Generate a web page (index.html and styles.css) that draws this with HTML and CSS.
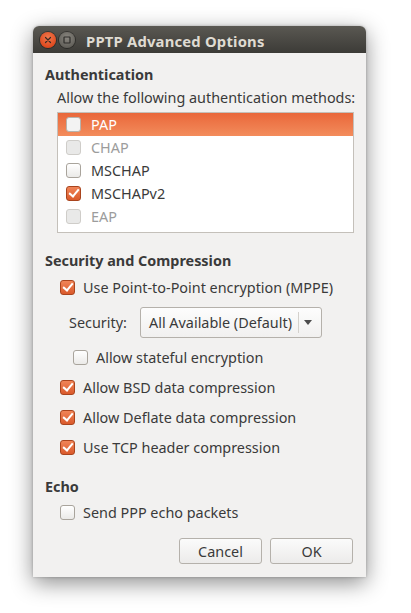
FILE: index.html
```html
<!DOCTYPE html>
<html>
<head>
<meta charset="utf-8">
<link rel="stylesheet" href="styles.css">
</head>
<body>
<div class="window">
  <div class="titlebar">
    <span class="wbtn close"><svg width="16" height="16" viewBox="0 0 16 16"><path d="M5.5 5.5l5 5M10.5 5.5l-5 5" stroke="#3a2a22" stroke-width="1.2" stroke-linecap="round"/></svg></span>
    <span class="wbtn mini"><svg width="16" height="16" viewBox="0 0 16 16"><rect x="5" y="5" width="6" height="6" rx="0.5" fill="none" stroke="#2e2d2a" stroke-width="1.2"/></svg></span>
    <span class="title">PPTP Advanced Options</span>
  </div>
  <div class="content">
    <div class="heading h-auth">Authentication</div>
    <div class="sub">Allow the following authentication methods:</div>
    <div class="list">
      <div class="row selected"><span class="cb"></span><span>PAP</span></div>
      <div class="row disabled"><span class="cb"></span><span>CHAP</span></div>
      <div class="row"><span class="cb"></span><span>MSCHAP</span></div>
      <div class="row"><span class="cb checked"></span><span>MSCHAPv2</span></div>
      <div class="row disabled"><span class="cb"></span><span>EAP</span></div>
    </div>

    <div class="heading h-sec">Security and Compression</div>
    <div class="opt first"><span class="cb checked"></span><span>Use Point-to-Point encryption (MPPE)</span></div>
    <div class="secrow">
      <span class="seclabel">Security:</span>
      <div class="combo"><span class="combotext">All Available (Default)</span><span class="combosep"></span><span class="arrow"></span></div>
    </div>
    <div class="opt stateful"><span class="cb"></span><span>Allow stateful encryption</span></div>
    <div class="opt bsd"><span class="cb checked"></span><span>Allow BSD data compression</span></div>
    <div class="opt gap"><span class="cb checked"></span><span>Allow Deflate data compression</span></div>
    <div class="opt gap"><span class="cb checked"></span><span>Use TCP header compression</span></div>

    <div class="heading h-echo">Echo</div>
    <div class="opt echo"><span class="cb"></span><span>Send PPP echo packets</span></div>

    <div class="buttons">
      <button class="btn">Cancel</button>
      <button class="btn">OK</button>
    </div>
  </div>
</div>
</body>
</html>
```

FILE: styles.css
```css
html, body {
  margin: 0;
  padding: 0;
  background: #ffffff;
}
body {
  width: 411px;
  height: 613px;
  overflow: hidden;
  font-family: "Noto Sans", "DejaVu Sans", sans-serif;
  font-size: 14.4px;
  color: #3a3a3a;
}
.window {
  margin: 26px 0 0 33px;
  width: 333px;
  height: 551px;
  background: #f2f1f0;
  border-radius: 6px 6px 0 0;
  box-shadow: 0 6px 22px rgba(0,0,0,0.45), 0 0 3px rgba(0,0,0,0.25);
  display: flex;
  flex-direction: column;
}
.titlebar {
  height: 27px;
  border-radius: 6px 6px 0 0;
  background: linear-gradient(#5a5852, #3c3b37);
  display: flex;
  align-items: center;
  padding-left: 7px;
}
.wbtn {
  width: 16px;
  height: 16px;
  border-radius: 50%;
  display: flex;
  align-items: center;
  justify-content: center;
  margin-right: 3px;
}
.wbtn.close {
  background: radial-gradient(circle at 50% 35%, #f07a4f, #df4a1f 70%, #b43c18);
  box-shadow: 0 0 0 1px rgba(0,0,0,0.35);
}
.wbtn.mini {
  background: radial-gradient(circle at 50% 35%, #8a8780, #64625c 70%, #4d4b46);
  box-shadow: 0 0 0 1px rgba(0,0,0,0.35);
}
.title {
  margin-left: 8px;
  font-weight: bold;
  font-size: 14.8px;
  color: #dfdbd2;
  letter-spacing: 0.2px;
  position: relative;
  top: 1px;
}
.content {
  flex: 1;
  display: flex;
  flex-direction: column;
  padding: 0 12px;
}
.heading {
  font-weight: bold;
  height: 18px;
  line-height: 18px;
}
.h-auth { margin-top: 13px; }
.sub {
  margin: 5px 0 0 12px;
  height: 18px;
  line-height: 18px;
  white-space: nowrap;
}
.list {
  margin: 5px 0 0 12px;
  height: 119px;
  background: #ffffff;
  border: 1px solid #c4c0ba;
  display: flex;
  flex-direction: column;
}
.row {
  height: 23px;
  display: flex;
  align-items: center;
  padding-left: 8px;
  gap: 10px;
}
.row.selected {
  background: linear-gradient(#e9673a, #f38c5c);
  color: #ffffff;
}
.row.disabled { color: #9c9c9c; }
.cb {
  width: 13px;
  height: 13px;
  border: 1px solid #a9a49c;
  border-radius: 3px;
  background: linear-gradient(#ffffff, #ebeae8);
  box-sizing: content-box;
  flex: none;
  position: relative;
}
.row.selected .cb {
  border-color: #b7b3ad;
  background: #f3f3f3;
}
.row.disabled .cb {
  border-color: #cfcdc9;
  background: #e9e9e8;
}
.cb.checked {
  border-color: #a9441d;
  background: linear-gradient(#f08458, #da5a2b);
}
.cb.checked::after {
  content: "";
  position: absolute;
  left: 4px;
  top: 0px;
  width: 4px;
  height: 8px;
  border-right: 2px solid #ffffff;
  border-bottom: 2px solid #ffffff;
  transform: rotate(40deg);
}
.h-sec { margin-top: 19px; }
.opt {
  display: flex;
  align-items: center;
  gap: 8px;
  height: 22px;
  margin-left: 15px;
  white-space: nowrap;
}
.opt.first { margin-top: 6px; }
.secrow {
  display: flex;
  align-items: center;
  margin: 9px 0 0 24px;
  height: 31px;
}
.seclabel { width: 71px; }
.combo {
  width: 182px;
  height: 31px;
  border: 1px solid #b5b1ab;
  border-radius: 3px;
  background: linear-gradient(#fdfdfd, #f1f0ef);
  display: flex;
  align-items: center;
  padding-left: 8px;
  box-sizing: border-box;
}
.combotext { width: 149px; white-space: nowrap; }
.combosep {
  width: 1px;
  height: 21px;
  background: #d4d1cc;
}
.arrow {
  margin-left: 5px;
  width: 0;
  height: 0;
  border-left: 4px solid transparent;
  border-right: 4px solid transparent;
  border-top: 5px solid #4c4c4c;
}
.opt.stateful { margin: 8px 0 0 28px; }
.opt.bsd { margin-top: 8px; }
.opt.gap { margin-top: 8px; }
.h-echo { margin-top: 20px; }
.opt.echo { margin-top: 5px; }
.buttons {
  display: flex;
  justify-content: flex-end;
  gap: 8px;
  margin-top: 15px;
  padding-right: 1px;
}
.btn {
  width: 83px;
  height: 26px;
  font-family: inherit;
  font-size: 14.4px;
  color: #3a3a3a;
  border: 1px solid #b5b1ab;
  border-radius: 3px;
  background: linear-gradient(#fbfbfb, #ecebea);
  padding: 0;
}
```
